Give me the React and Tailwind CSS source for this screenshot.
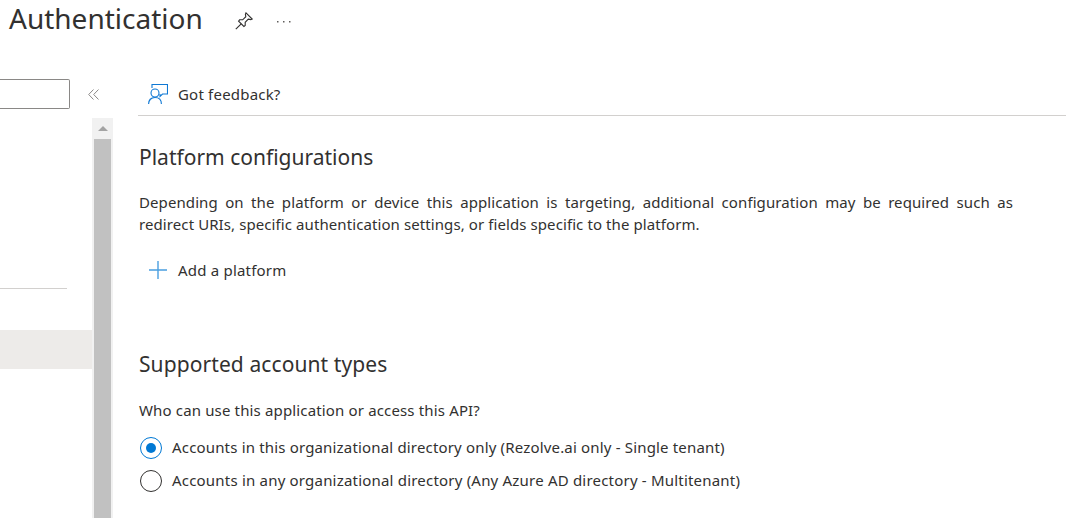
const font = { fontFamily: '"Noto Sans", sans-serif' };

const FeedbackIcon = () => (
    <svg width="20" height="20" viewBox="0 0 20 20" fill="none" stroke="#0f78d4" strokeWidth="1.1">
        <path d="M4 4V0.5h15.5V10H14.5l-2.5 2.5V10" />
        <circle cx="7" cy="9" r="4" fill="#fff" />
        <path d="M0.6 20c0-4 2.6-6.5 6.4-6.5s6.4 2.5 6.4 6.5" />
    </svg>
);

const PinIcon = () => (
    <svg width="18" height="18" viewBox="0 0 18 18" fill="none" stroke="#323130" strokeWidth="1.1">
        <path d="M11 0.8L17.2 7L15.8 7.6L13.3 7.2L10.2 10.3V13.4L8.9 14.4L3.6 9.1L4.6 7.8H7.7L10.8 4.7L10.4 2.2Z" />
        <path d="M6.2 11.8L0.8 17.2" />
    </svg>
);

const Radio = ({ checked, label, tracking }) => (
    <div className="flex h-[33px] items-center gap-[10px] pl-[1px]">
        <span
            className={`flex h-[22px] w-[22px] items-center justify-center rounded-full border bg-white ${
                checked ? "border-[#0078d4]" : "border-[#323130]"
            }`}
        >
            {checked && <span className="h-[10px] w-[10px] rounded-full bg-[#0078d4]" />}
        </span>
        <span className={`text-[15px] text-[#323130] ${tracking}`}>{label}</span>
    </div>
);

export default function App() {
    return (
        <div className="h-[518px] w-[1066px] overflow-hidden bg-white text-[#323130]" style={font}>
            {/* Title bar */}
            <div className="flex h-[79px] items-start pl-[9px]">
                <h1 className="text-[28px] leading-[36px] text-[#323130]">Authentication</h1>
                <div className="ml-[32px] mt-[12px]">
                    <PinIcon />
                </div>
                <svg className="ml-[23px] mt-[20px]" width="16" height="3" viewBox="0 0 16 3" fill="#605e5c">
                    <rect x="1" y="1" width="1.5" height="1.5" />
                    <rect x="7" y="1" width="1.5" height="1.5" />
                    <rect x="13" y="1" width="1.5" height="1.5" />
                </svg>
            </div>

            <div className="flex h-[439px]">
                {/* Left menu */}
                <div className="flex w-[113px] shrink-0 flex-col">
                    <div className="flex h-[39px] shrink-0 items-start">
                        <div className="h-[30px] w-[70px] rounded-r-[2px] border border-l-0 border-[#8a8886]" />
                        <svg className="ml-[18px] mt-[10px]" width="11" height="11" viewBox="0 0 11 11" fill="none" stroke="#8a8886" strokeWidth="1">
                            <path d="M5.5 0.5L0.7 5.5L5.5 10.5M10.5 0.5L5.7 5.5L10.5 10.5" />
                        </svg>
                    </div>
                    <div className="flex min-h-0 flex-1">
                        <div className="w-[92px] shrink-0">
                            <div className="mt-[170px] h-px w-[67px] bg-[#d2d0ce]" />
                            <div className="mt-[41px] h-[39px] bg-[#edebe9]" />
                        </div>
                        <div className="flex w-[21px] flex-col bg-[#f1f1f1] px-[2px]">
                            <div className="flex h-[21px] shrink-0 items-center justify-center">
                                <span className="h-0 w-0 border-x-[5px] border-b-[5px] border-x-transparent border-b-[#a3a3a3]" />
                            </div>
                            <div className="flex-1 bg-[#c1c1c1]" />
                        </div>
                    </div>
                </div>

                {/* Main content */}
                <div className="min-w-0 flex-1 pl-[25px]">
                    <div className="flex h-[37px] items-center gap-[10px] border-b border-[#d2d0ce] pb-[6px] pl-[10px]">
                        <FeedbackIcon />
                        <span className="text-[15px] tracking-[0.2px]">Got feedback?</span>
                    </div>

                    <div className="w-[875px] pl-[1px]">
                        <h2 className="mt-[26px] text-[21px] leading-[30px]">Platform configurations</h2>
                        <p className="mt-[19px] text-justify text-[15px] leading-[22px] tracking-[0.09px]">
                            Depending on the platform or device this application is targeting, additional configuration may
                            be required such as redirect URIs, specific authentication settings, or fields specific to the
                            platform.
                        </p>
                        <div className="mt-[23px] flex h-[24px] items-center gap-[10px] pl-[9px]">
                            <svg width="20" height="20" viewBox="0 0 20 20" stroke="#4a9fe0" strokeWidth="1.4">
                                <path d="M10 1v18M1 10h18" />
                            </svg>
                            <span className="text-[15px] tracking-[0.2px]">Add a platform</span>
                        </div>
                        <h2 className="mt-[67px] text-[21px] leading-[30px] tracking-[0.09px]">Supported account types</h2>
                        <p className="mt-[21px] text-[15px] leading-[20px] tracking-[0.15px]">
                            Who can use this application or access this API?
                        </p>
                        <div className="mt-[11px]">
                            <Radio checked tracking="tracking-[0.17px]" label="Accounts in this organizational directory only (Rezolve.ai only - Single tenant)" />
                            <Radio tracking="tracking-[0.2px]" label="Accounts in any organizational directory (Any Azure AD directory - Multitenant)" />
                        </div>
                    </div>
                </div>
            </div>
        </div>
    );
}
